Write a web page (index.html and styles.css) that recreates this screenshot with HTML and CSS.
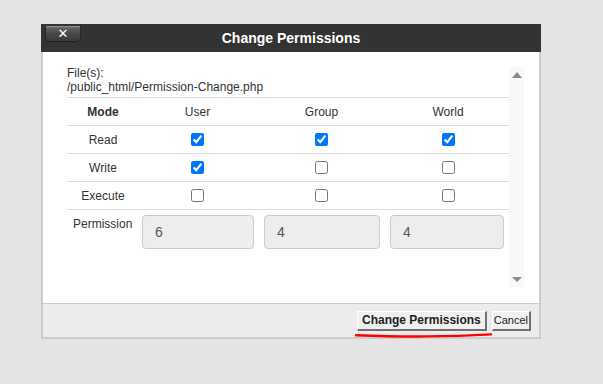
FILE: index.html
```html
<!DOCTYPE html>
<html>
	<head>
		<title>Change Permissions</title>
		<meta charset="utf-8">
		<link rel="stylesheet" href="styles.css">
	</head>
	<body>
	<div class="dialog">
		<div class="dialog-head">
			<button class="close" title="Close">&#x2715;</button>
			<h1>Change Permissions</h1>
		</div>
		<div class="dialog-body">
			<div class="scroll">
				<div class="content">
					<div class="files">File(s):<br>/public_html/Permission-Change.php</div>
					<div class="row row-head">
						<span class="mode">Mode</span>
						<span>User</span>
						<span>Group</span>
						<span>World</span>
					</div>
					<div class="row">
						<span>Read</span>
						<span><input type="checkbox" checked></span>
						<span><input type="checkbox" checked></span>
						<span><input type="checkbox" checked></span>
					</div>
					<div class="row">
						<span>Write</span>
						<span><input type="checkbox" checked></span>
						<span><input type="checkbox"></span>
						<span><input type="checkbox"></span>
					</div>
					<div class="row">
						<span>Execute</span>
						<span><input type="checkbox"></span>
						<span><input type="checkbox"></span>
						<span><input type="checkbox"></span>
					</div>
					<div class="perm-row">
						<label>Permission</label>
						<input class="perm" type="text" value="6" readonly>
						<input class="perm" type="text" value="4" readonly>
						<input class="perm" type="text" value="4" readonly>
					</div>
				</div>
				<div class="scrollbar">
					<span class="arrow-up"></span>
					<span class="arrow-down"></span>
				</div>
			</div>
		</div>
		<div class="dialog-foot">
			<button class="btn btn-primary">Change Permissions</button>
			<button class="btn btn-cancel">Cancel</button>
			<svg class="mark" width="140" height="7" viewBox="0 0 140 7">
				<path d="M2 3.2 Q 40 4.6 72 4.4 T 137 2.4" fill="none" stroke="#f00" stroke-width="2.4" stroke-linecap="round"/>
			</svg>
		</div>
	</div>
	</body>
</html>
```

FILE: styles.css
```css
html{
	background: #e4e4e4;
}

body{
	margin: 0;
	font-family: "Liberation Sans", Arial, sans-serif;
	font-size: 12px;
	color: #333;
}

.dialog{
	width: 500px;
	margin: 24px 0 0 41px;
}

.dialog-head{
	display: grid;
	grid-template-columns: 1fr auto 1fr;
	height: 28px;
	background: #333;
}

.dialog-head h1{
	grid-column: 2;
	margin: 0;
	font-size: 14px;
	line-height: 28px;
	color: #fff;
}

.close{
	grid-column: 1;
	grid-row: 1;
	justify-self: start;
	align-self: start;
	width: 34px;
	height: 15px;
	margin: 2px 0 0 5px;
	padding: 0;
	border: none;
	border-radius: 0 0 4px 4px;
	background: linear-gradient(#9a9a9a 0, #606060 2px, #474747 8px, #3a3a3a);
	box-shadow: 0 1px 0 #1e1e1e, 1px 0 0 #262626, -1px 0 0 #262626;
	font-family: "DejaVu Sans", sans-serif;
	font-size: 13px;
	font-weight: bold;
	line-height: 15px;
	color: #fff;
}

.dialog-body{
	height: 251px;
	box-sizing: border-box;
	padding: 14px 15px 16px 24px;
	background: #fff;
	border: solid #ccc;
	border-width: 0 2px;
	display: flex;
}

.scroll{
	flex: 1;
	min-width: 0;
	display: flex;
}

.content{
	flex: 1;
	min-width: 0;
}

.files{
	line-height: 14px;
	padding-bottom: 3px;
}

.row{
	display: grid;
	grid-template-columns: 72px 117px 131px 1fr;
	align-items: center;
	height: 27px;
	border-bottom: 1px solid #ddd;
	text-align: center;
}

.row-head{
	border-top: 1px solid #ddd;
}

.mode{
	font-weight: bold;
}

.row input{
	display: block;
	margin: -1px auto 0;
}

.row span{
	line-height: 14px;
}

.perm-row{
	display: grid;
	grid-template-columns: 65px 112px 116px 114px;
	column-gap: 10px;
	align-items: start;
	padding-top: 5px;
}

.perm-row label{
	padding: 2px 0 0 6px;
}

.perm{
	width: 100%;
	min-width: 0;
	height: 34px;
	box-sizing: border-box;
	margin: 0;
	padding: 0 0 0 12px;
	border: 1px solid #ccc;
	border-radius: 4px;
	background: #ededed;
	font-family: "Liberation Sans", Arial, sans-serif;
	font-size: 14px;
	color: #555;
	outline: none;
}

.scrollbar{
	flex: none;
	width: 15px;
	margin-top: 1px;
	padding: 5px 0;
	box-sizing: border-box;
	background: #f8f8f8;
	display: flex;
	flex-direction: column;
	justify-content: space-between;
	align-items: center;
}

.arrow-up{
	width: 0;
	height: 0;
	border-left: 5px solid transparent;
	border-right: 5px solid transparent;
	border-bottom: 6px solid #8a8a8a;
}

.arrow-down{
	width: 0;
	height: 0;
	border-left: 5px solid transparent;
	border-right: 5px solid transparent;
	border-top: 5px solid #8a8a8a;
}

.dialog-foot{
	position: relative;
	height: 33px;
	display: flex;
	justify-content: flex-end;
	align-items: center;
	gap: 5px;
	padding-right: 8px;
	background: #ececec;
	border: solid #ccc;
	border-width: 1px 2px 2px;
}

.btn{
	height: 20px;
	margin: 0;
	padding: 0 2px;
	background: #f0f0f0;
	border-style: solid;
	border-width: 1px 2px 2px 1px;
	border-color: #fff #707070 #707070 #fff;
	font-family: "Liberation Sans", Arial, sans-serif;
	font-size: 12px;
	line-height: 15px;
	color: #222;
}

.btn-primary{
	font-weight: bold;
	padding: 0 4px 0 4px;
}

.btn-cancel{
	font-size: 11px;
	padding: 0 1px;
}

.mark{
	position: absolute;
	left: 311px;
	top: 28px;
}
```
